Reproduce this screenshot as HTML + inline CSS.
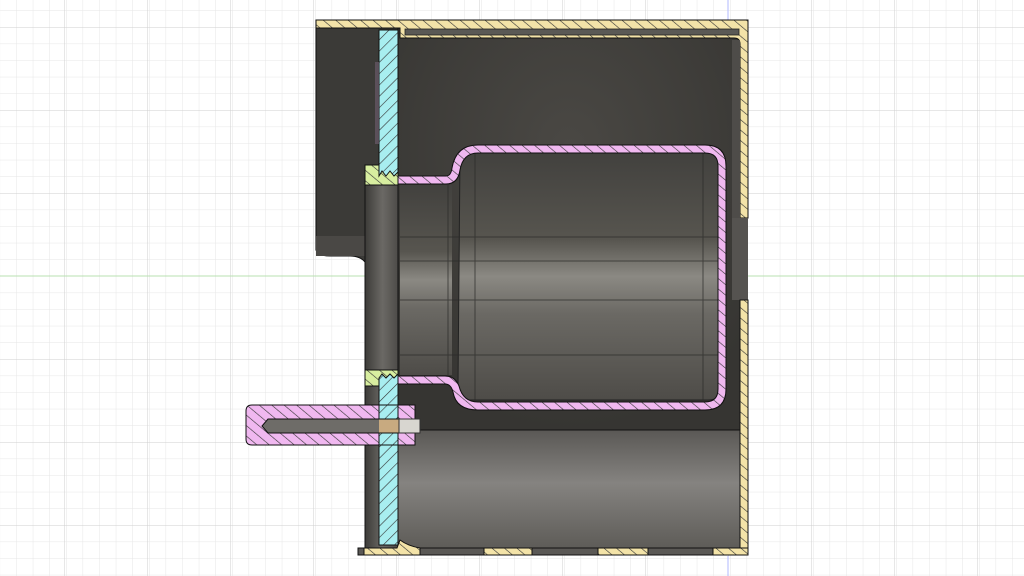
<!DOCTYPE html>
<html><head><style>html,body{margin:0;padding:0;background:#fff;width:1024px;height:576px;overflow:hidden}</style></head><body>
<svg width="1024" height="576" viewBox="0 0 1024 576" xmlns="http://www.w3.org/2000/svg">
<defs>
<pattern id="minor" width="16.6" height="16.6" patternUnits="userSpaceOnUse" x="730" y="276">
<path d="M0 0H16.6M0 0V16.6" stroke="#e6e6e6" stroke-width="1" fill="none"/></pattern>
<pattern id="major" width="83" height="83" patternUnits="userSpaceOnUse" x="728" y="276">
<path d="M0 0H83M0 0V83" stroke="#cfcfcf" stroke-width="1" fill="none"/></pattern>
<pattern id="hy" width="8" height="8" patternUnits="userSpaceOnUse" patternTransform="rotate(-50)"><rect width="8" height="8" fill="#f3e3a8"/><path d="M0 0V8" stroke="#333" stroke-width="1.2"/></pattern>
<pattern id="hc" width="8" height="8" patternUnits="userSpaceOnUse" patternTransform="rotate(45)"><rect width="8" height="8" fill="#a8eef0"/><path d="M0 0V8" stroke="#333" stroke-width="1.2"/></pattern>
<pattern id="hp" width="8" height="8" patternUnits="userSpaceOnUse" patternTransform="rotate(-50)"><rect width="8" height="8" fill="#f0b8f0"/><path d="M0 0V8" stroke="#333" stroke-width="1.2"/></pattern>
<pattern id="hg" width="8" height="8" patternUnits="userSpaceOnUse" patternTransform="rotate(-50)"><rect width="8" height="8" fill="#d8eea0"/><path d="M0 0V8" stroke="#333" stroke-width="1.2"/></pattern>
<radialGradient id="dk" cx="0.5" cy="0.3" r="0.7"><stop offset="0" stop-color="#4a4844"/><stop offset="1" stop-color="#363532"/></radialGradient>
<linearGradient id="low" x1="0" y1="0" x2="0" y2="1"><stop offset="0" stop-color="#5a5855"/><stop offset="0.45" stop-color="#858380"/><stop offset="1" stop-color="#5e5c58"/></linearGradient>
<linearGradient id="cup" x1="0" y1="0" x2="0" y2="1"><stop offset="0" stop-color="#42413e"/><stop offset="0.35" stop-color="#57554f"/><stop offset="0.5" stop-color="#8b8983"/><stop offset="0.65" stop-color="#6b6964"/><stop offset="1" stop-color="#4e4c48"/></linearGradient>
<linearGradient id="col" x1="0" y1="0" x2="1" y2="0"><stop offset="0" stop-color="#3c3b38"/><stop offset="0.5" stop-color="#6b6965"/><stop offset="1" stop-color="#4a4845"/></linearGradient>
</defs>
<rect width="1024" height="576" fill="url(#minor)"/>
<rect width="1024" height="576" fill="url(#major)"/>
<line x1="0" y1="276" x2="1024" y2="276" stroke="#b8e0b0" stroke-width="1"/>
<line x1="728" y1="0" x2="728" y2="20" stroke="#b0b8ff" stroke-width="1"/>
<line x1="728" y1="556" x2="728" y2="576" stroke="#b0b8ff" stroke-width="1"/>

<path d="M316 28H400V265H365V262Q360 256 350 256H330Q318 256 316 250Z" fill="#3b3a37" stroke="#111" stroke-width="1"/>
<rect x="316" y="236" width="50" height="20" fill="#4a4845"/>
<rect x="365" y="185" width="35" height="363" fill="url(#col)" stroke="#111"/>
<rect x="398" y="28" width="342" height="402" fill="url(#dk)" stroke="#111"/>
<rect x="398" y="430" width="342" height="118" fill="url(#low)" stroke="#111"/>
<rect x="400" y="185" width="52" height="190" fill="url(#cup)"/>
<path d="M460 153H712Q720 153 720 165V390Q720 400 708 400H470Q458 400 458 388Z" fill="url(#cup)" stroke="#222"/>
<g stroke="#2a2a28" stroke-width="1" opacity="0.7">
<line x1="400" y1="237" x2="720" y2="237"/><line x1="400" y1="261" x2="720" y2="261"/>
<line x1="400" y1="300" x2="720" y2="300"/><line x1="400" y1="355" x2="720" y2="355"/>
<line x1="475" y1="153" x2="475" y2="400"/><line x1="703" y1="153" x2="703" y2="400"/>
<line x1="448" y1="185" x2="448" y2="375"/>
</g>
<path d="M316 20H748V218H740V44Q740 38 734 38H400V28H316Z" fill="url(#hy)" stroke="#111"/>
<rect x="405" y="29" width="334" height="6" fill="#5a5955" stroke="#222" stroke-width="0.8"/>
<rect x="732" y="40" width="8" height="178" fill="#4e4c49"/>
<rect x="732" y="218" width="16" height="82" fill="#555350"/>
<path d="M740 300H748V555H728V548H740Z" fill="url(#hy)" stroke="#111"/>
<rect x="358" y="548" width="390" height="7" fill="#5a5855" stroke="#111"/>
<path d="M364 555V548H397L400 540Q408 546 420 548V555Z" fill="url(#hy)" stroke="#111"/>
<rect x="484" y="548" width="48" height="7" fill="url(#hy)" stroke="#111"/>
<rect x="598" y="548" width="50" height="7" fill="url(#hy)" stroke="#111"/>
<rect x="713" y="548" width="35" height="7" fill="url(#hy)" stroke="#111"/>
<path d="M398 176H446Q451 176 452 168Q456 145 478 145H705Q726 145 726 166V389Q726 410 705 410H478Q456 410 453 392Q451 384 445 384H398V376H445Q455 376 459 386Q463 402 478 402H705Q718 402 718 389V166Q718 153 705 153H478Q463 153 460 170Q458 184 446 184H398Z" fill="url(#hp)" stroke="#111"/>
<rect x="365" y="165" width="33" height="20" fill="url(#hg)" stroke="#111"/>
<rect x="365" y="370" width="33" height="16" fill="url(#hg)" stroke="#111"/>
<path d="M379 30H398V172L394 176L390 171L386 176L382 171L379 176Z" fill="url(#hc)" stroke="#111"/>
<path d="M379 378L382 374L386 378L390 374L394 378L398 374V545H379Z" fill="url(#hc)" stroke="#111"/>
<rect x="375" y="62" width="4" height="82" fill="#6a5a6a" opacity="0.7"/>
<path d="M252 405H415V445H252Q246 445 246 439V411Q246 405 252 405Z" fill="url(#hp)" stroke="#111"/>
<path d="M268 419H420V433H268L262 426Z" fill="#6e6c68" stroke="#111"/>
<rect x="379" y="419" width="20" height="14" fill="#c8aa80"/>
<rect x="399" y="419" width="21" height="14" fill="#d8d6d0" stroke="#333"/>
<rect x="379" y="405" width="19" height="14" fill="url(#hc)" stroke="#111"/>
<rect x="379" y="433" width="19" height="12" fill="url(#hc)" stroke="#111"/>
</svg>
</body></html>
